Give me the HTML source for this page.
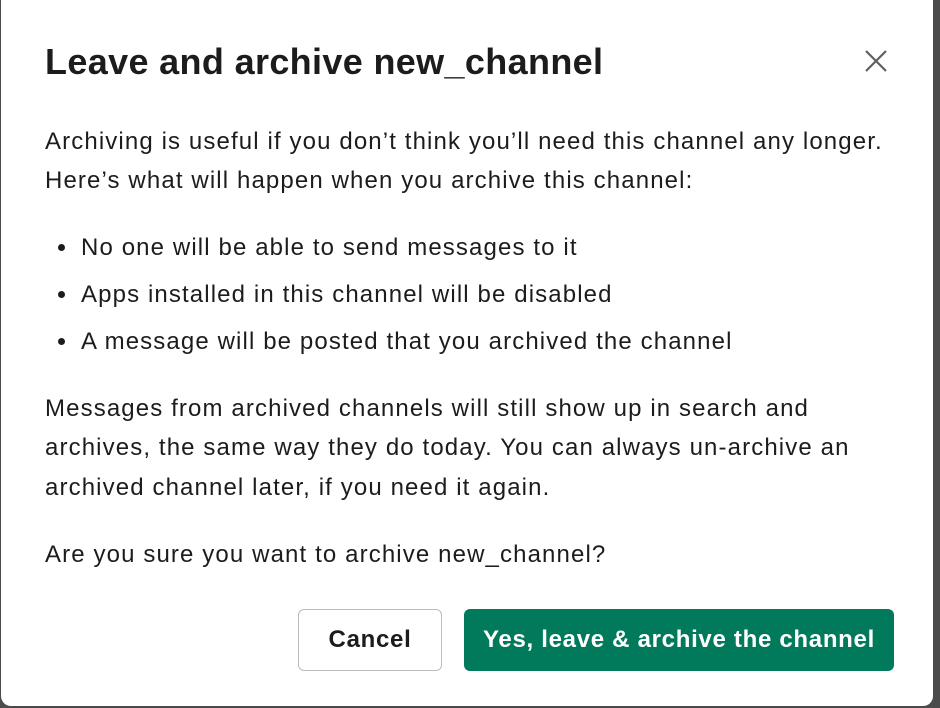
<!DOCTYPE html>
<html><head><meta charset="utf-8"><style>
html,body{margin:0;padding:0;width:940px;height:708px;overflow:hidden;background:#4b4b4b;}
.d{position:absolute;left:1px;top:-12px;width:932px;height:718px;background:#fff;border-radius:10px;font-family:"Liberation Sans",sans-serif;color:#1d1c1d;}
.t{position:absolute;left:44px;top:53px;font-size:36px;font-weight:bold;letter-spacing:0.35px;white-space:nowrap;}
.x{position:absolute;left:862px;top:60px;}
.p{position:absolute;left:44px;font-size:24px;white-space:nowrap;letter-spacing:1.12px;}
.b{position:absolute;left:57px;width:7px;height:7px;border-radius:50%;background:#1d1c1d;}
.btn{position:absolute;top:621px;height:62px;border-radius:6px;box-sizing:border-box;font-size:24px;font-weight:bold;display:flex;align-items:center;justify-content:center;letter-spacing:0.7px;}
</style></head><body><div class="d">
<div class="t">Leave and archive new_channel</div>
<svg class="x" width="26" height="26" viewBox="0 0 26 26"><path d="M3 3L23 23M23 3L3 23" stroke="#616061" stroke-width="2.2"/></svg>
<div class="p" style="top:140px">Archiving is useful if you don’t think you’ll need this channel any longer.</div>
<div class="p" style="top:179px">Here’s what will happen when you archive this channel:</div>
<div class="b" style="top:256px"></div><div class="p" style="left:80px;top:246px">No one will be able to send messages to it</div>
<div class="b" style="top:303px"></div><div class="p" style="left:80px;top:293px">Apps installed in this channel will be disabled</div>
<div class="b" style="top:350px"></div><div class="p" style="left:80px;top:340px">A message will be posted that you archived the channel</div>
<div class="p" style="top:407px">Messages from archived channels will still show up in search and</div>
<div class="p" style="top:446px">archives, the same way they do today. You can always un-archive an</div>
<div class="p" style="top:486px">archived channel later, if you need it again.</div>
<div class="p" style="top:553px">Are you sure you want to archive new_channel?</div>
<div class="btn" style="left:297px;width:144px;border:1.5px solid #bbb;color:#1d1c1d;">Cancel</div>
<div class="btn" style="left:463px;width:430px;background:#007a5a;color:#fff;">Yes, leave &amp; archive the channel</div>
</div></body></html>
